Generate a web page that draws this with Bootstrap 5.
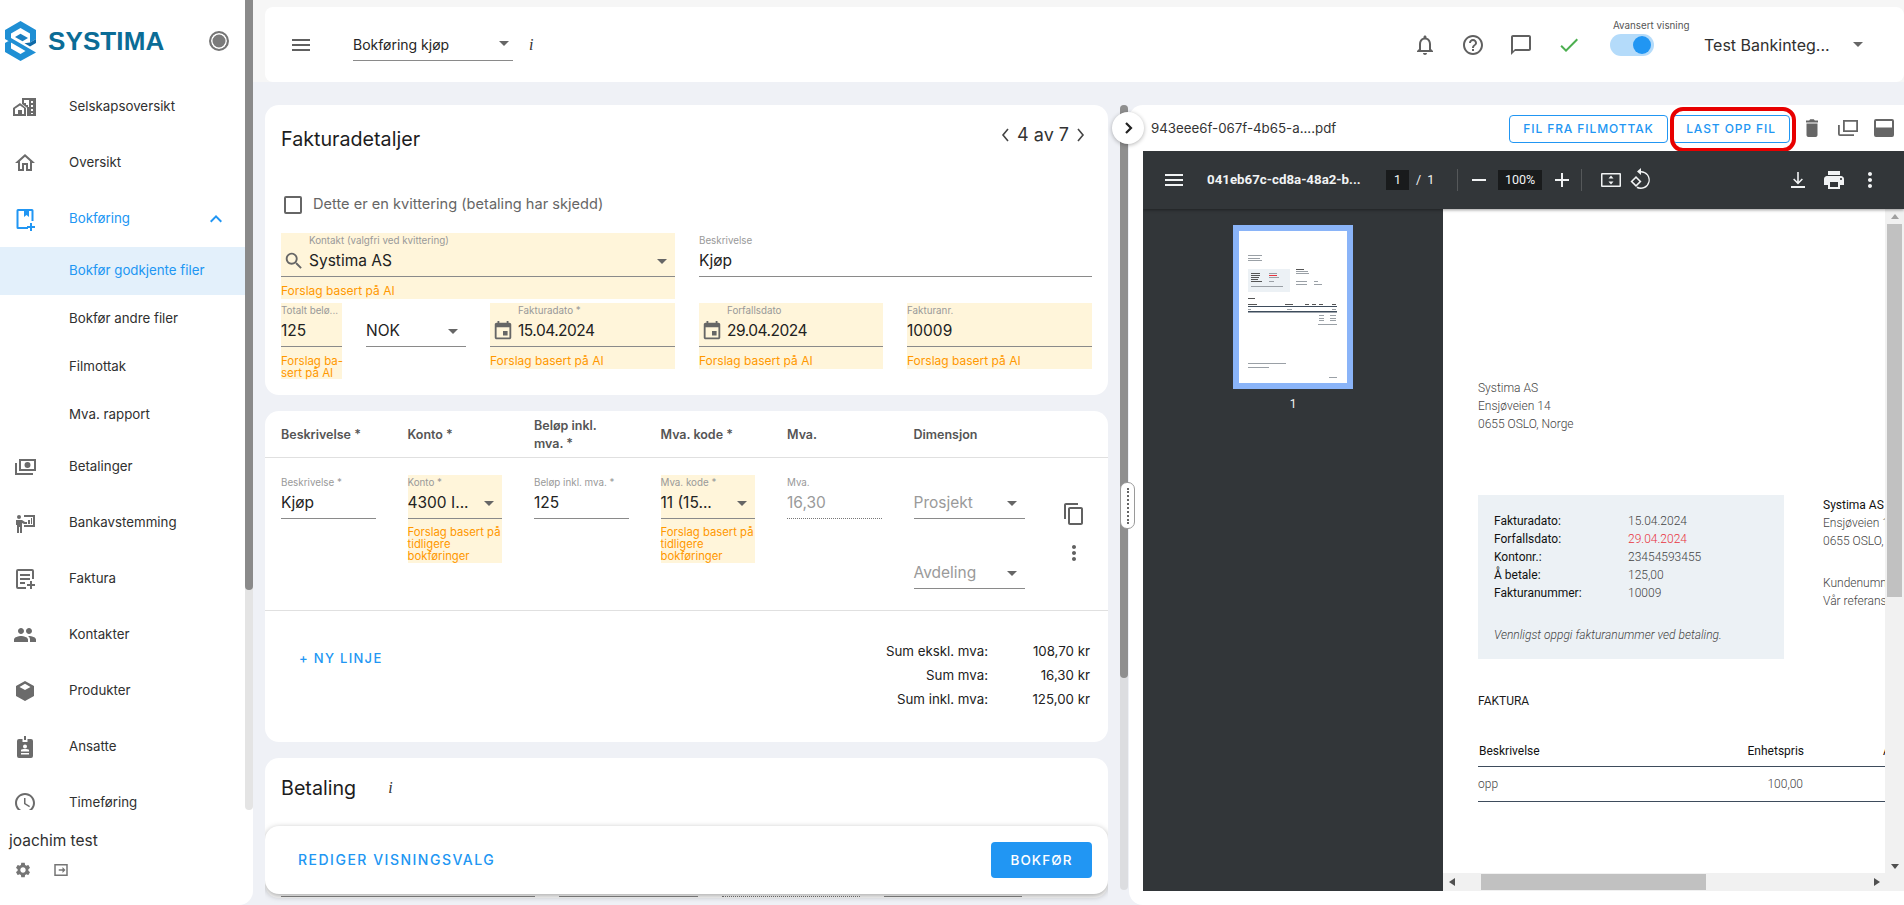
<!DOCTYPE html>
<html lang="no">
<head>
<meta charset="utf-8">
<title>Systima</title>
<link rel="stylesheet" href="https://cdn.jsdelivr.net/npm/bootstrap@5.3.0/dist/css/bootstrap.min.css">
<style>
html,body{height:100%;overflow:hidden}
body{background:#eff1f6;font-family:Inter,"Liberation Sans",sans-serif;color:#212121;font-size:14px}
.app{height:905px;width:1904px}
svg{display:block;flex:none}
/* sidebar */
.side{width:253px;height:905px;background:#fff;border-radius:0 0 14px 0;flex:none;position:relative}
.side-scroll{width:245px;height:810px;overflow:hidden}
.brand{height:81px;padding:21px 16px 0 5px}
.brand-word{font-family:"Liberation Sans",sans-serif;font-weight:700;font-size:26px;line-height:40px;letter-spacing:.1px;color:#0b6c96;margin-left:12px}
.pin{width:20px;height:20px;border-radius:50%;background:#7b7b7b;border:2px solid #757575;box-shadow:inset 0 0 0 1.5px #fff;margin:10px 0 0 auto;align-self:flex-start}
.nav-i{height:56px;display:flex;align-items:center;padding-left:13px;color:#303030;font-size:13.3px}
.nav-i svg{fill:#6b6b6b;width:24px;height:24px}
.nav-i span{margin-left:32px}
.nav-i.on{color:#2196f3}
.nav-i.on svg{fill:#2196f3}
.nav-i .chev{margin-left:auto;margin-right:17px}
.nav-s{height:48px;display:flex;align-items:center;padding-left:69px;color:#303030;font-size:13.3px}
.nav-s.on{background:#e3f0fb;color:#2196f3}
.nav-first{margin-top:-2px}
.s-track{position:absolute;left:245px;top:0;width:8px;height:810px;background:#e4e4e4;border-radius:0 0 4px 4px}
.s-thumb{width:8px;height:590px;background:#8a8a8a;border-radius:0 0 4px 4px}
.user{padding:20px 0 0 9px;font-size:15.5px;line-height:22px;color:#303030}
.user-ic{padding:9px 0 0 14px;gap:20px}
.user-ic svg{width:18px;height:18px;fill:#757575}
/* main */
.mainw{width:1651px;height:905px;background:linear-gradient(#f6f6f6 0,#f6f6f6 82px,#eff1f6 82px);padding:7px 0 0 12px;flex:none}
.topb{height:75px;background:#fff;border-radius:8px;padding:0 41px 0 24px;width:1639px}
.topb svg.tic{width:24px;height:24px;fill:#606060}
.sel-top{width:160px;height:33px;border-bottom:1px solid #8a8a8a;margin:0 0 0 40px;font-size:14px;line-height:24px;padding-top:5px;color:#262626}
.caret{width:0;height:0;border-left:5px solid transparent;border-right:5px solid transparent;border-top:5px solid #666;flex:none}
.ii{font-family:"Liberation Serif",serif;font-style:italic;font-size:16px;color:#333}
.top-i{margin-left:16px}
.tools{margin-left:auto;gap:24px}
.tgl{width:44px;height:22px;border-radius:11px;background:#b4dbfa;position:relative;margin-left:29px}
.tgl i{position:absolute;right:3px;top:2px;width:18px;height:18px;border-radius:50%;background:#2196f3}
.tgl-wrap{position:relative}
.tgl-lab{position:absolute;left:32px;top:-15px;font-size:9.8px;white-space:nowrap;color:#555}
.comp{margin-left:50px;font-size:16px;width:149px;color:#303030;white-space:nowrap}
.work{margin-top:23px;gap:21px;height:800px}
.lft{width:843px;flex:none;position:relative;height:800px;overflow:hidden}
.pane{background:#fff;border-radius:14px}
.p1{height:290px;padding:0 16px}
.h-row{height:68px;padding-top:21px}
.ttl{font-size:19.7px;line-height:26px;color:#1d1d1d;font-weight:400}
.pager{margin-left:auto;font-size:18px;line-height:20px;margin-right:6px;margin-top:-1px;gap:7px;color:#333;align-self:flex-start}
.pager svg{width:10px;height:16px;stroke:#444;fill:none;stroke-width:1.6}
.chk{margin-top:23px;height:18px;gap:11px;color:#666;font-size:14.6px;padding-left:3px}
.box{width:18px;height:18px;border:2px solid #666;border-radius:2px}
.f{position:relative}
.y{background:#fff5da}
.flab{font-size:9.8px;line-height:16px;color:#999;height:14px;white-space:nowrap}
.fval{font-size:15.5px;line-height:24px;height:28px;color:#222;display:flex;align-items:center;white-space:nowrap}
.dt{letter-spacing:-.5px}
.fline{border-bottom:1px solid #8a8a8a}
.hlp{font-size:12px;line-height:14px;color:#ff9800;padding-top:7px}
.row-a{margin-top:19px;gap:24px}
.a1{width:394px;height:66px}
.a2{width:393px;height:44px}
.tp{height:44px}
.t-ic{padding-left:28px}
.ic-abs{position:absolute;left:2px;top:17px;width:22px;height:22px;fill:#666}
.row-b{margin-top:4px;gap:24px}
.b1{width:61px;height:76px}
.b2{width:100px}
.b3{width:185px;height:66px}
.b4{width:184px;height:66px}
.b5{width:185px;height:66px}
.rowv{justify-content:space-between}
.tp .caret{margin-right:8px}
.hlp-n{line-height:12px;padding-top:8px;white-space:nowrap;font-size:11.5px}
.p2{height:331px;margin-top:16px;position:relative}
.thd{height:47px;border-bottom:1px solid #e0e0e0;padding:2px 16px 0;grid-template-columns:repeat(6,126.5px);display:grid;align-items:center;font-size:12.5px;line-height:18px;font-weight:600;color:#555}
.trw{height:153px;border-bottom:1px solid #e0e0e0;padding:17px 16px 0;display:grid;grid-template-columns:repeat(6,126.5px) 1fr;align-items:start}
.cell{width:94.5px}
.cell.y{height:88px}
.hlp-c{font-size:11.3px;line-height:12px;padding-top:7px;white-space:nowrap}
.dim{width:111px}
.dim-2{margin-top:26px}
.dotl{border-bottom:1px dotted #777}
.mut{color:#9a9a9a}
.acts{margin-left:16px;padding-top:27px;gap:15px}
.acts svg{fill:#616161}
.sumr{padding:28px 18px 0 34px}
.txtbtn{font-size:13px;font-weight:500;color:#2196f3;letter-spacing:1.3px;line-height:18px}
.txtbig{font-size:14px;letter-spacing:1.5px}
.nyl{padding-top:10px}
.sum-t{margin-left:auto;font-size:13.3px;line-height:24px;color:#222}
.sum-l{text-align:right;width:160px}
.sum-v{text-align:right;width:102px}
.p3{height:140px;margin-top:16px;padding:17px 16px;position:relative}
.ii-b{margin-left:32px}
.p3-lines{position:absolute;left:16px;top:138px;gap:24px}
.l1{width:254px}.l2{width:139px}.l3{width:138px}.l4{width:138px}
.bar{position:absolute;left:0;top:721px;width:843px;height:68px;background:#fff;border-radius:14px;box-shadow:0 2px 6px rgba(0,0,0,.35);padding:0 16px 0 33px}
.btn-save{width:101px;height:36px;background:#2196f3;color:#fff;border:0;border-radius:4px;font-size:13.5px;font-weight:500;letter-spacing:1.1px;margin-left:auto;padding:0}
/* right */
.rgt{width:775px;height:800px;background:#fff;border-radius:14px 0 0 14px;position:relative;flex:none;padding-left:14px}
.col-tr{position:absolute;left:-9px;top:0;width:8px;height:785px;background:#dcdde0;border-radius:4px}
.col-th{width:8px;height:573px;background:#8f8f8f;border-radius:4px}
.tog{position:absolute;left:-17px;top:7px;width:32px;height:32px;border-radius:50%;background:#fff;box-shadow:0 1px 4px rgba(0,0,0,.3);z-index:2}
.tog svg{width:12px;height:14px;fill:none;stroke:#222;stroke-width:2.2}
.hdl{position:absolute;left:-9px;top:377px;width:15px;height:47px;background:#fff;border:1px solid #9a9a9a;border-radius:7px;z-index:2}
.hdl i{display:block;width:0;border-left:2px dotted #666;margin:5px auto;height:36px}
.rh{height:46px;padding-left:8px;font-size:13.3px;color:#333}
.fl-name{width:348px;padding-top:2px}
.obtn{height:28px;border:1px solid #2196f3;border-radius:4px;color:#2196f3;font-size:12px;font-weight:500;letter-spacing:.9px;background:#fff;padding:0;line-height:26px;margin-top:2px}
.ob1{width:159px;margin-left:10px}
.ob2{width:118px;margin-left:4px;position:relative}
.redb{position:absolute;left:-3px;top:-9px;width:126px;height:45px;border:4px solid #e80000;border-radius:13px}
.rh-ic{margin-left:10px;gap:12px;margin-top:0}
.rh-ic svg{fill:#666;width:24px;height:24px}
.viewer{width:761px;height:740px;background:#323639;position:relative;overflow:hidden}
.vbar{height:58px;background:#323639;color:#f1f3f4;box-shadow:0 1px 3px rgba(0,0,0,.4);position:relative;z-index:1;padding-left:19px;font-family:Roboto,sans-serif}
.vbar svg{fill:#f1f3f4;width:24px;height:24px}
.vname{font-size:13.3px;font-weight:700;margin-left:21px;width:179px;white-space:nowrap;color:#f1f3f4}
.pg-box{width:23px;height:20px;background:#191b1c;font-size:12.5px;line-height:20px;text-align:center}
.pgs{font-size:12.5px;margin-left:7px;width:41px;word-spacing:3px}
.sep{width:1px;height:22px;background:#55585a}
.mn{margin-left:9px}
.zm{width:44px;height:20px;background:#191b1c;font-size:12.5px;line-height:20px;text-align:center;margin-left:7px}
.pl{margin-left:8px}
.sep2{margin-left:7px}
.fit{margin-left:17px}
.rot{margin-left:5px}
.v-right{margin-left:auto;margin-right:22px;gap:12px}
.vbody{height:682px}
.thumbs{width:300px;padding-top:16px;flex:none}
.thumb{width:120px;height:164px;margin:0 auto;background:#8ab4f8;padding:6px}
.thumb svg{background:#fff;width:108px;height:152px}
.tnum{color:#f1f3f4;text-align:center;font-size:12px;font-family:Roboto,sans-serif;margin-top:6px}
.pdf{width:461px;height:682px;position:relative;background:#fff;overflow:hidden;flex:none}
.pg-in{width:442px;height:664px;overflow:hidden;font-family:Roboto,sans-serif;font-size:12px;line-height:18px;color:#444;padding:170px 0 0 35px;font-weight:300}
.pg-in b{font-weight:400;color:#111}
.inv-row{margin-top:62px}
.infobox{width:306px;height:164px;background:#ecf1f5;padding:17px 16px 0;flex:none}
.lbl-w{width:134px;flex:none}
.red-t{color:#e8343f}
.ven{font-style:italic;margin-top:24px}
.inv-r{margin-left:39px;white-space:nowrap;padding-top:1px}
.gp{margin-top:24px}
.fak{margin-top:33px;color:#1a1a1a;font-weight:400}
.tbl{margin-top:32px;width:500px;font-weight:300}
.tbl-h{height:25px;border-bottom:1px solid #3e4c5c;padding-left:1px;font-weight:400;color:#111}
.tbl-r{height:35px;border-bottom:1px solid #3e4c5c;align-items:center}
.c-enh{width:325px;text-align:right;flex:none}
.c-d1{width:0}
.c-a{margin-left:79px}
.vs{position:absolute;right:0;top:0;width:19px;height:664px;background:#f1f1f1;padding:0 2px}
.vs i{display:block;width:15px;height:373px;margin-top:15px;background:#c1c1c1}
.hs{position:absolute;left:0;bottom:0;width:461px;height:18px;background:#f1f1f1}
.hs i{display:block;margin-left:38px;width:225px;height:16px;background:#c1c1c1;position:relative;top:1px}
.ar{position:absolute;width:0;height:0}
.ar-l{left:6px;top:5px;border:4px solid transparent;border-left:0;border-right:6px solid #505050}
.ar-r{left:431px;top:5px;border:4px solid transparent;border-right:0;border-left:6px solid #505050}
.ar-d{left:448px;bottom:22px;border:4px solid transparent;border-bottom:0;border-top:5px solid #505050}
.ar-u{left:448px;top:5px;border:4px solid transparent;border-top:0;border-bottom:5px solid #a0a0a0}
</style>
</head>
<body>
<div class="app d-flex">
  <aside class="side">
    <div class="side-scroll">
      <div class="brand d-flex">
        <svg width="31" height="40" viewBox="0 0 31 40"><path d="M15.500 0 31 9v9l-6 3.500V12.500L15.500 7 6 12.500v4.500l25 14.500L15.500 40 0 31v-9l6-3.500v9L15.500 33l5-3L0 18V9z" fill="#1f8fd4"/><path d="M10 16l5.500-3.300L23 17l-5.500 3.200z" fill="#1a7fc0"/><path d="M25 21.500 31 18v4l-6 3.500-5.500-3.200z" fill="#0f6aa8"/></svg>
        <span class="brand-word">SYSTIMA</span>
        <span class="pin"></span>
      </div>
      <div class="nav-i nav-first"><svg viewBox="0 0 24 24"><path d="M9 3h14v18H14v-8.300L9 9zm2 0v0zM15 5h-4v3h2v2h2v2h1V5zm3 1v2h2V6zm0 4v2h2v-2zm0 4v2h2v-2zm0 4v1h2v-1zM7 8 0 13v8h13v-8zm0 2.500 4 2.800V19H9v-4H5v4H2v-5.200z" fill-rule="evenodd"/></svg><span>Selskapsoversikt</span></div>
      <div class="nav-i"><svg viewBox="0 0 24 24"><path d="M12 5.690l5 4.500V18h-2v-6H9v6H7v-7.810l5-4.500M12 3L2 12h3v8h6v-6h2v6h6v-8h3L12 3z"/></svg><span>Oversikt</span></div>
      <div class="nav-i on"><svg viewBox="0 0 24 24"><path d="M5 2h14a1.500 1.500 0 0 1 1.500 1.500V14h-2V4H16v6l-2.500-2L11 10V4H5.500v16H15v2H5a1.500 1.500 0 0 1-1.500-1.500v-17A1.500 1.500 0 0 1 5 2zm14 14v3h3v2h-3v3h-2v-3h-3v-2h3v-3z"/></svg><span>Bokføring</span><svg class="chev" viewBox="0 0 24 24"><path d="M12 8l-6 6 1.410 1.410L12 10.830l4.590 4.580L18 14z"/></svg></div>
      <div class="nav-s on">Bokfør godkjente filer</div>
      <div class="nav-s">Bokfør andre filer</div>
      <div class="nav-s">Filmottak</div>
      <div class="nav-s">Mva. rapport</div>
      <div class="nav-i"><svg viewBox="0 0 24 24"><path d="M6 4h17v12H6zm2 2v8h13V6zm6.500 1a3 3 0 1 1 0 6 3 3 0 0 1 0-6zM2 8h2v10h16v2H2z" fill-rule="evenodd"/></svg><span>Betalinger</span></div>
      <div class="nav-i"><svg viewBox="0 0 24 24"><circle cx="6" cy="6" r="2"/><path d="M3 9h6l3 2h1v2h-2l-2-1v10H7v-6H6v6H4v-8H3zM11 4h11v12H11v-2h9V6h-9zm1 7h2v2h-2zm3-2h2v4h-2zm3-2h1v6h-1z"/></svg><span>Bankavstemming</span></div>
      <div class="nav-i"><svg viewBox="0 0 24 24"><path d="M19 2H5a2 2 0 0 0-2 2v16a2 2 0 0 0 2 2h8v-2H5V4h14v8h2V4a2 2 0 0 0-2-2zM19 14h-2v3h-3v2h3v3h2v-3h3v-2h-3zM7 7h10v2H7zm0 4h10v2H7zM7 15h5v2H7z"/></svg><span>Faktura</span></div>
      <div class="nav-i"><svg viewBox="0 0 24 24"><path d="M16 11c1.660 0 2.990-1.340 2.990-3S17.660 5 16 5c-1.660 0-3 1.340-3 3s1.340 3 3 3zm-8 0c1.660 0 2.990-1.340 2.990-3S9.660 5 8 5C6.340 5 5 6.340 5 8s1.340 3 3 3zm0 2c-2.330 0-7 1.170-7 3.500V19h14v-2.500c0-2.330-4.670-3.500-7-3.500zm8 0c-.29 0-.62.020-.97.050 1.160.84 1.970 1.970 1.970 3.450V19h6v-2.500c0-2.330-4.670-3.500-7-3.500z"/></svg><span>Kontakter</span></div>
      <div class="nav-i"><svg viewBox="0 0 24 24"><path d="M12 2 21 7v10l-9 5-9-5V7zm0 2.800L6.500 8 12 11l5.500-3z" fill-rule="evenodd"/></svg><span>Produkter</span></div>
      <div class="nav-i"><svg viewBox="0 0 24 24"><path d="M11 1h2v4h-2zM6 4h3.500v3h5V4H18a2 2 0 0 1 2 2v15a2 2 0 0 1-2 2H6a2 2 0 0 1-2-2V6a2 2 0 0 1 2-2zm6 5.500a2 2 0 1 0 0 4 2 2 0 0 0 0-4zM8 15v1.500h8V15c0-.8-2.500-1-4-1s-4 .2-4 1zm0 3v1.500h8V18z" fill-rule="evenodd"/></svg><span>Ansatte</span></div>
      <div class="nav-i"><svg viewBox="0 0 24 24"><path d="M11.990 2C6.470 2 2 6.480 2 12s4.470 10 9.990 10C17.520 22 22 17.520 22 12S17.520 2 11.990 2zM12 20c-4.420 0-8-3.580-8-8s3.580-8 8-8 8 3.580 8 8-3.580 8-8 8zm.5-13H11v6l5.250 3.150.75-1.230-4.500-2.670z"/></svg><span>Timeføring</span></div>
    </div>
    <div class="s-track"><div class="s-thumb"></div></div>
    <div class="user">joachim test</div>
    <div class="user-ic d-flex">
      <svg viewBox="0 0 24 24"><path d="M19.140 12.940c.04-.3.060-.61.060-.94 0-.32-.020-.64-.070-.94l2.030-1.580c.18-.14.23-.41.12-.61l-1.920-3.320c-.12-.22-.37-.29-.59-.22l-2.390.96c-.5-.38-1.030-.7-1.620-.94l-.36-2.540c-.040-.24-.24-.41-.48-.41h-3.840c-.24 0-.43.17-.47.41l-.36 2.540c-.59.24-1.130.57-1.620.94l-2.390-.96c-.22-.080-.47 0-.59.22L2.740 8.870c-.12.21-.080.47.12.61l2.030 1.580c-.050.3-.090.63-.090.94s.020.64.070.94l-2.030 1.580c-.18.14-.23.41-.12.61l1.920 3.320c.12.22.37.29.59.22l2.390-.96c.5.38 1.030.7 1.620.94l.36 2.540c.050.24.24.41.48.41h3.840c.24 0 .44-.17.47-.41l.36-2.540c.59-.24 1.130-.56 1.620-.94l2.390.96c.22.080.47 0 .59-.22l1.920-3.320c.12-.22.070-.47-.12-.61l-2.010-1.580zM12 15.600c-1.980 0-3.600-1.620-3.600-3.600s1.620-3.600 3.600-3.600 3.600 1.620 3.600 3.600-1.620 3.600-3.600 3.600z"/></svg>
      <svg viewBox="0 0 24 24"><path d="M3 4h18v16H3zm2 2v12h14V6zm4 5h5V8l4 4-4 4v-3H9z" fill-rule="evenodd"/></svg>
    </div>
  </aside>
  <div class="mainw">
    <div class="topb d-flex align-items-center">
      <svg class="tic" viewBox="0 0 24 24"><path d="M3 18h18v-2H3v2zm0-5h18v-2H3v2zm0-7v2h18V6H3z"/></svg>
      <div class="sel-top d-flex justify-content-between"><span>Bokføring kjøp</span><span class="caret mt-2 me-1"></span></div>
      <span class="ii top-i">i</span>
      <div class="tools d-flex align-items-center">
        <svg class="tic" viewBox="0 0 24 24"><path d="M12 22c1.100 0 2-.9 2-2h-4c0 1.100.9 2 2 2zm6-6v-5c0-3.070-1.630-5.640-4.500-6.320V4c0-.83-.67-1.500-1.500-1.500s-1.500.67-1.500 1.500v.68C7.640 5.360 6 7.920 6 11v5l-2 2v1h16v-1l-2-2zm-2 1H8v-6c0-2.480 1.510-4.500 4-4.500s4 2.020 4 4.500v6z"/></svg>
        <svg class="tic" viewBox="0 0 24 24"><path d="M11 18h2v-2h-2v2zm1-16C6.480 2 2 6.480 2 12s4.480 10 10 10 10-4.480 10-10S17.520 2 12 2zm0 18c-4.410 0-8-3.590-8-8s3.590-8 8-8 8 3.590 8 8-3.590 8-8 8zm0-14c-2.210 0-4 1.790-4 4h2c0-1.100.9-2 2-2s2 .9 2 2c0 2-3 1.750-3 5h2c0-2.250 3-2.500 3-5 0-2.210-1.790-4-4-4z"/></svg>
        <svg class="tic" viewBox="0 0 24 24"><path d="M20 2H4c-1.100 0-2 .9-2 2v18l4-4h14c1.100 0 2-.9 2-2V4c0-1.100-.9-2-2-2zm0 14H6l-2 2V4h16v12z"/></svg>
        <svg width="24" height="24" viewBox="0 0 24 24"><path fill="#4caf50" d="M9 16.170L4.830 12l-1.420 1.410L9 19 21 7l-1.410-1.410z"/></svg>
      </div>
      <div class="tgl-wrap"><div class="tgl-lab">Avansert visning</div><div class="tgl"><i></i></div></div>
      <div class="comp">Test Bankinteg...</div>
      <span class="caret"></span>
    </div>
    <div class="work d-flex">
      <div class="lft">
        <section class="pane p1">
          <div class="h-row d-flex">
            <h2 class="ttl m-0">Fakturadetaljer</h2>
            <div class="pager d-flex align-items-center">
              <svg viewBox="0 0 10 16"><path d="M8 2 3 8l5 6"/></svg><span>4 av 7</span><svg viewBox="0 0 10 16"><path d="M2 2l5 6-5 6"/></svg>
            </div>
          </div>
          <div class="chk d-flex align-items-center"><span class="box"></span><span>Dette er en kvittering (betaling har skjedd)</span></div>
          <div class="d-flex row-a">
            <div class="f y a1">
              <div class="tp fline t-ic">
                <div class="flab">Kontakt (valgfri ved kvittering)</div>
                <div class="fval rowv"><span>Systima AS</span><span class="caret"></span></div>
              </div>
              <svg class="ic-abs" viewBox="0 0 24 24"><path d="M15.500 14h-.79l-.28-.27C15.410 12.590 16 11.110 16 9.500 16 5.910 13.090 3 9.500 3S3 5.910 3 9.500 5.910 16 9.500 16c1.610 0 3.090-.59 4.230-1.570l.27.28v.79l5 4.990L20.490 19l-4.990-5zm-6 0C7.010 14 5 11.990 5 9.500S7.010 5 9.500 5 14 7.010 14 9.500 11.990 14 9.500 14z"/></svg>
              <div class="hlp">Forslag basert på AI</div>
            </div>
            <div class="f a2 tp fline">
              <div class="flab">Beskrivelse</div>
              <div class="fval">Kjøp</div>
            </div>
          </div>
          <div class="d-flex row-b align-items-start">
            <div class="f y b1">
              <div class="tp fline"><div class="flab">Totalt belø...</div><div class="fval">125</div></div>
              <div class="hlp hlp-n">Forslag ba-<br>sert på AI</div>
            </div>
            <div class="f b2 tp fline"><div class="flab"></div><div class="fval rowv"><span>NOK</span><span class="caret"></span></div></div>
            <div class="f y b3">
              <div class="tp fline t-ic"><div class="flab">Fakturadato *</div><div class="fval dt">15.04.2024</div></div>
              <svg class="ic-abs" viewBox="0 0 24 24"><path d="M17 12h-5v5h5v-5zM16 1v2H8V1H6v2H5c-1.110 0-1.990.9-1.990 2L3 19c0 1.100.89 2 2 2h14c1.100 0 2-.9 2-2V5c0-1.100-.9-2-2-2h-1V1h-2zm3 18H5V8h14v11z"/></svg>
              <div class="hlp">Forslag basert på AI</div>
            </div>
            <div class="f y b4">
              <div class="tp fline t-ic"><div class="flab">Forfallsdato</div><div class="fval dt">29.04.2024</div></div>
              <svg class="ic-abs" viewBox="0 0 24 24"><path d="M17 12h-5v5h5v-5zM16 1v2H8V1H6v2H5c-1.110 0-1.990.9-1.990 2L3 19c0 1.100.89 2 2 2h14c1.100 0 2-.9 2-2V5c0-1.100-.9-2-2-2h-1V1h-2zm3 18H5V8h14v11z"/></svg>
              <div class="hlp">Forslag basert på AI</div>
            </div>
            <div class="f y b5">
              <div class="tp fline"><div class="flab">Fakturanr.</div><div class="fval">10009</div></div>
              <div class="hlp">Forslag basert på AI</div>
            </div>
          </div>
        </section>
        <section class="pane p2">
          <div class="thd">
            <div>Beskrivelse *</div><div>Konto *</div><div>Beløp inkl.<br>mva. *</div><div>Mva. kode *</div><div>Mva.</div><div>Dimensjon</div>
          </div>
          <div class="trw">
            <div class="cell"><div class="tp fline"><div class="flab">Beskrivelse *</div><div class="fval">Kjøp</div></div></div>
            <div class="cell y"><div class="tp fline"><div class="flab">Konto *</div><div class="fval rowv"><span>4300 I...</span><span class="caret"></span></div></div><div class="hlp hlp-c">Forslag basert på<br>tidligere<br>bokføringer</div></div>
            <div class="cell"><div class="tp fline"><div class="flab">Beløp inkl. mva. *</div><div class="fval">125</div></div></div>
            <div class="cell y"><div class="tp fline"><div class="flab">Mva. kode *</div><div class="fval rowv"><span>11 (15...</span><span class="caret"></span></div></div><div class="hlp hlp-c">Forslag basert på<br>tidligere<br>bokføringer</div></div>
            <div class="cell"><div class="tp dotl"><div class="flab">Mva.</div><div class="fval mut">16,30</div></div></div>
            <div class="dim">
              <div class="tp fline"><div class="flab"></div><div class="fval rowv mut"><span>Prosjekt</span><span class="caret"></span></div></div>
              <div class="tp fline dim-2"><div class="flab"></div><div class="fval rowv mut"><span>Avdeling</span><span class="caret"></span></div></div>
            </div>
            <div class="acts d-flex flex-column align-items-center">
              <svg width="24" height="24" viewBox="0 0 24 24"><path d="M16 1H4c-1.100 0-2 .9-2 2v14h2V3h12V1zm3 4H8c-1.100 0-2 .9-2 2v14c0 1.100.9 2 2 2h11c1.100 0 2-.9 2-2V7c0-1.100-.9-2-2-2zm0 16H8V7h11v14z"/></svg>
              <svg width="24" height="24" viewBox="0 0 24 24"><path d="M12 8c1.100 0 2-.9 2-2s-.9-2-2-2-2 .9-2 2 .9 2 2 2zm0 2c-1.100 0-2 .9-2 2s.9 2 2 2 2-.9 2-2-.9-2-2-2zm0 6c-1.100 0-2 .9-2 2s.9 2 2 2 2-.9 2-2-.9-2-2-2z"/></svg>
            </div>
          </div>
          <div class="sumr d-flex">
            <div class="txtbtn nyl">+ NY LINJE</div>
            <div class="sum-t">
              <div class="d-flex"><div class="sum-l">Sum ekskl. mva:</div><div class="sum-v">108,70 kr</div></div>
              <div class="d-flex"><div class="sum-l">Sum mva:</div><div class="sum-v">16,30 kr</div></div>
              <div class="d-flex"><div class="sum-l">Sum inkl. mva:</div><div class="sum-v">125,00 kr</div></div>
            </div>
          </div>
        </section>
        <section class="pane p3">
          <div class="d-flex align-items-center"><h2 class="ttl m-0">Betaling</h2><span class="ii ii-b">i</span></div>
          <div class="p3-lines d-flex"><div class="l1 fline"></div><div class="l2 fline"></div><div class="l3 dotl"></div><div class="l4 fline"></div></div>
        </section>
        <div class="bar d-flex align-items-center">
          <span class="txtbtn txtbig">REDIGER VISNINGSVALG</span>
          <button class="btn-save" type="button">BOKFØR</button>
        </div>
      </div>
      <div class="rgt">
        <div class="col-tr"><div class="col-th"></div></div>
        <div class="tog d-flex align-items-center justify-content-center"><svg viewBox="0 0 12 14"><path d="M4 2l5 5-5 5"/></svg></div>
        <div class="hdl"><i></i></div>
        <div class="rh d-flex align-items-center">
          <div class="fl-name">943eee6f-067f-4b65-a....pdf</div>
          <button class="obtn ob1" type="button">FIL FRA FILMOTTAK</button>
          <button class="obtn ob2" type="button">LAST OPP FIL<span class="redb"></span></button>
          <div class="rh-ic d-flex">
            <svg viewBox="0 0 24 24"><path d="M6.500 19c0 1.100.8 2 1.900 2h7.200c1.100 0 1.900-.9 1.900-2V7.500h-11zM18 4.500h-3.200l-1-1.200h-3.600l-1 1.200H6v2h12z"/></svg>
            <svg viewBox="0 0 24 24"><path d="M7 4h15v12H7zm1.800 1.800v8.400h11.400V5.800zM2 9h1.800v9.200H18V20H4a2 2 0 0 1-2-2z" fill-rule="evenodd"/></svg>
            <svg viewBox="0 0 24 24"><path d="M4 3h16a2 2 0 0 1 2 2v14a2 2 0 0 1-2 2H4a2 2 0 0 1-2-2V5a2 2 0 0 1 2-2zm0 2v6.500h16V5z" fill-rule="evenodd"/></svg>
          </div>
        </div>
        <div class="viewer">
          <div class="vbar d-flex align-items-center">
            <svg viewBox="0 0 24 24"><path d="M3 18h18v-2H3v2zm0-5h18v-2H3v2zm0-7v2h18V6H3z"/></svg>
            <div class="vname">041eb67c-cd8a-48a2-b...</div>
            <div class="pg-box">1</div><div class="pgs">/ 1</div>
            <div class="sep"></div>
            <svg class="mn" viewBox="0 0 24 24"><path d="M5 11h14v2H5z"/></svg>
            <div class="zm">100%</div>
            <svg class="pl" viewBox="0 0 24 24"><path d="M19 13h-6v6h-2v-6H5v-2h6V5h2v6h6z"/></svg>
            <div class="sep sep2"></div>
            <svg class="fit" viewBox="0 0 24 24"><path d="M3 5h18a1 1 0 0 1 1 1v12a1 1 0 0 1-1 1H3a1 1 0 0 1-1-1V6a1 1 0 0 1 1-1zm.5 1.500v11h17v-11zM12 7.500l2.500 3h-5zm0 9-2.500-3h5z" fill-rule="evenodd"/></svg>
            <svg class="rot" viewBox="0 0 24 24"><path d="M13 3V0L9 3.500 13 7V4.500a7.500 7.500 0 1 1-3.500 14.100l-1 1.300A9 9 0 1 0 13 3zM8 8l-5.500 5.500L8 19l5.500-5.500zm0 2.200 3.300 3.300L8 16.800l-3.300-3.300z" fill-rule="evenodd"/></svg>
            <div class="v-right d-flex">
              <svg viewBox="0 0 24 24"><path d="M5 18h14v2H5zM11.200 4h1.600v9.500l3-3 1.100 1.100-4.900 4.900-4.900-4.900 1.100-1.100 3 3z"/></svg>
              <svg viewBox="0 0 24 24"><path d="M19 8H5c-1.660 0-3 1.340-3 3v6h4v4h12v-4h4v-6c0-1.660-1.340-3-3-3zm-3 11H8v-5h8v5zm3-7c-.55 0-1-.45-1-1s.45-1 1-1 1 .45 1 1-.45 1-1 1zm-1-9H6v4h12V3z"/></svg>
              <svg viewBox="0 0 24 24"><path d="M12 8c1.100 0 2-.9 2-2s-.9-2-2-2-2 .9-2 2 .9 2 2 2zm0 2c-1.100 0-2 .9-2 2s.9 2 2 2 2-.9 2-2-.9-2-2-2zm0 6c-1.100 0-2 .9-2 2s.9 2 2 2 2-.9 2-2-.9-2-2-2z"/></svg>
            </div>
          </div>
          <div class="vbody d-flex">
            <div class="thumbs">
              <div class="thumb">
                <svg viewBox="0 0 108 152" fill="#9aa0a6">
                  <rect x="9" y="24" width="14" height="1"/><rect x="9" y="27" width="12" height="1"/><rect x="9" y="29" width="14" height="1"/>
                  <rect x="9" y="38" width="42" height="23" fill="#ecf1f5"/>
                  <rect x="12" y="42" width="9" height="1" fill="#555"/><rect x="30" y="42" width="8" height="1"/><rect x="12" y="44" width="9" height="1" fill="#555"/><rect x="30" y="44" width="8" height="1" fill="#e8343f"/><rect x="12" y="46" width="8" height="1" fill="#555"/><rect x="30" y="46" width="10" height="1"/><rect x="12" y="48" width="7" height="1" fill="#555"/><rect x="12" y="50" width="11" height="1" fill="#555"/><rect x="30" y="50" width="5" height="1"/><rect x="12" y="55" width="32" height="1"/>
                  <rect x="57" y="38" width="8" height="1" fill="#555"/><rect x="57" y="40" width="12" height="1"/><rect x="57" y="42" width="13" height="1"/><rect x="57" y="50" width="11" height="1"/><rect x="75" y="50" width="4" height="1"/><rect x="57" y="53" width="11" height="1"/><rect x="75" y="53" width="8" height="1"/>
                  <rect x="9" y="67" width="7" height="1" fill="#555"/>
                  <rect x="9" y="73" width="9" height="1" fill="#555"/><rect x="46" y="73" width="8" height="1" fill="#555"/><rect x="66" y="73" width="4" height="1" fill="#555"/><rect x="73" y="73" width="4" height="1" fill="#555"/><rect x="80" y="73" width="4" height="1" fill="#555"/><rect x="93" y="73" width="4" height="1" fill="#555"/>
                  <rect x="9" y="75" width="89" height="1" fill="#3e4c5c"/><rect x="9" y="78" width="3" height="1"/><rect x="48" y="78" width="5" height="1"/><rect x="93" y="78" width="4" height="1"/><rect x="9" y="80" width="89" height="1.500" fill="#3e4c5c"/>
                  <rect x="80" y="84" width="5" height="1"/><rect x="91" y="84" width="6" height="1"/><rect x="80" y="87" width="5" height="1"/><rect x="91" y="87" width="6" height="1"/><rect x="80" y="89" width="5" height="1"/><rect x="91" y="89" width="6" height="1"/><rect x="79" y="93" width="19" height="1"/>
                  <rect x="9" y="132" width="38" height="1"/><rect x="9" y="136" width="21" height="1"/><rect x="90" y="146" width="8" height="1"/>
                </svg>
              </div>
              <div class="tnum">1</div>
            </div>
            <div class="pdf">
              <div class="pg-in">
                <div>Systima AS<br>Ensjøveien 14<br>0655 OSLO, Norge</div>
                <div class="d-flex inv-row">
                  <div class="infobox">
                    <div class="d-flex"><div class="lbl-w"><b>Fakturadato:</b></div><div>15.04.2024</div></div>
                    <div class="d-flex"><div class="lbl-w"><b>Forfallsdato:</b></div><div class="red-t">29.04.2024</div></div>
                    <div class="d-flex"><div class="lbl-w"><b>Kontonr.:</b></div><div>23454593455</div></div>
                    <div class="d-flex"><div class="lbl-w"><b>Å betale:</b></div><div>125,00</div></div>
                    <div class="d-flex"><div class="lbl-w"><b>Fakturanummer:</b></div><div>10009</div></div>
                    <div class="ven">Vennligst oppgi fakturanummer ved betaling.</div>
                  </div>
                  <div class="inv-r"><b>Systima AS</b><br>Ensjøveien 14<br>0655 OSLO, Norge<div class="gp">Kundenummer<br>Vår referanse</div></div>
                </div>
                <div class="fak">FAKTURA</div>
                <div class="tbl">
                  <div class="tbl-h d-flex"><div class="c-d1 flex-shrink-0 text-nowrap">Beskrivelse</div><div class="c-enh">Enhetspris</div><div class="c-a">Antall</div></div>
                  <div class="tbl-r d-flex"><div class="c-d1 flex-shrink-0">opp</div><div class="c-enh">100,00</div></div>
                </div>
              </div>
              <div class="vs"><i></i></div>
              <div class="hs"><i></i><span class="ar ar-l"></span><span class="ar ar-r"></span></div>
              <span class="ar ar-d"></span><span class="ar ar-u"></span>
            </div>
          </div>
        </div>
      </div>
    </div>
  </div>
</div>
<script src="https://cdn.jsdelivr.net/npm/bootstrap@5.3.0/dist/js/bootstrap.bundle.min.js"></script>
</body>
</html>
